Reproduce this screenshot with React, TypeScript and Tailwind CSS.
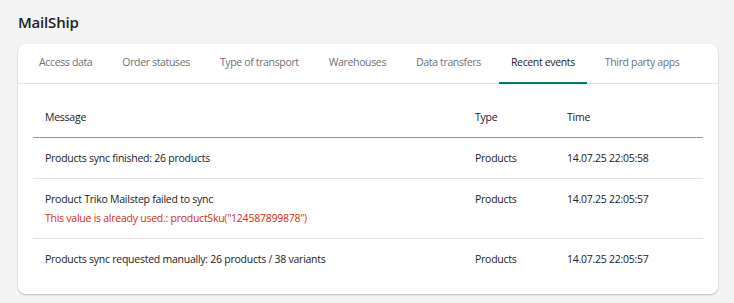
import React from "react";

const tabs = ["Access data", "Order statuses", "Type of transport", "Warehouses", "Data transfers", "Recent events", "Third party apps"];

const rows = [
  { msg: "Products sync finished: 26 products", type: "Products", time: "14.07.25 22:05:58" },
  { msg: "Product Triko Mailstep failed to sync", err: 'This value is already used.: productSku("124587899878")', type: "Products", time: "14.07.25 22:05:57" },
  { msg: "Products sync requested manually: 26 products / 38 variants", type: "Products", time: "14.07.25 22:05:57" },
];

export default function App() {
  return (
    <div className="w-[734px] h-[303px] bg-[#f4f4f4] px-[18px] pt-[11px] text-[#202223]" style={{ fontFamily: '"Open Sans", "Noto Sans", sans-serif' }}>
      <h1 className="text-[15px] font-semibold leading-[22px] h-[33px] tracking-[-0.2px]">MailShip</h1>
      <div className="bg-white rounded-[8px] shadow-[0_1px_2px_rgba(0,0,0,0.25)] w-[700px]">
        <div className="flex gap-[6px] pl-[9px] border-b border-[#e1e3e5] h-[40px]">
          {tabs.map((t) => {
            const active = t === "Recent events";
            return (
              <div key={t} className={`px-[12px] flex items-center whitespace-nowrap text-[10.5px] tracking-[-0.35px] ${active ? "text-[#202223] border-b-2 border-[#008060]" : "text-[#6d7175] border-b-2 border-transparent"} -mb-px`}>
                {t}
              </div>
            );
          })}
        </div>
        <div className="px-[15px] pt-[14px] pb-[15px] text-[10.5px] tracking-[-0.25px]">
          <div className="flex h-[40px] items-center border-b border-[#8c9196]">
            <div className="pl-[12px] w-[442px]">Message</div>
            <div className="w-[92px]">Type</div>
            <div>Time</div>
          </div>
          {rows.map((r, i) => (
            <div key={i} className={`flex py-[12px] leading-[16px] ${i < rows.length - 1 ? "border-b border-[#e1e3e5]" : ""}`}>
              <div className="pl-[12px] w-[442px]">
                <div>{r.msg}</div>
                {r.err && <div className="text-[#d72c0d] mt-[3px]">{r.err}</div>}
              </div>
              <div className="w-[92px]">{r.type}</div>
              <div>{r.time}</div>
            </div>
          ))}
        </div>
      </div>
    </div>
  );
}
